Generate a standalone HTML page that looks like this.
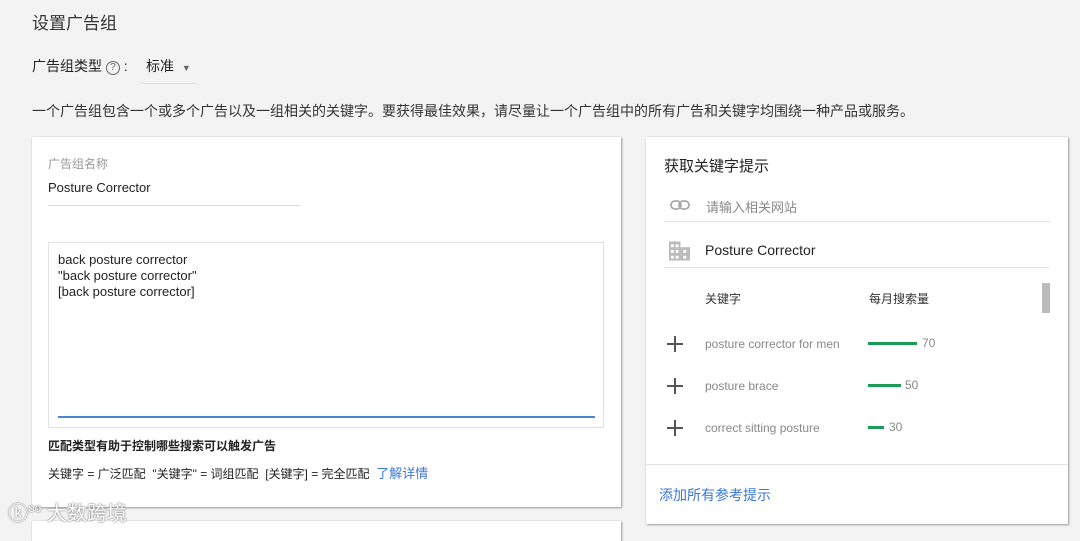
<!DOCTYPE html>
<html><head><meta charset="utf-8"><style>
*{margin:0;padding:0;box-sizing:border-box}
html,body{width:1080px;height:530px}
body{background:#f3f3f3;font-family:"Liberation Sans","Noto Sans CJK SC",sans-serif;color:#222;position:relative;overflow:hidden}
.a{position:absolute;white-space:nowrap}
.card{position:absolute;background:#fff;box-shadow:1px 1px 2px rgba(0,0,0,.35),0 0 1px rgba(0,0,0,.2)}
.plus{position:absolute;width:16px;height:16px}
.plus:before{content:"";position:absolute;left:0;top:7px;width:16px;height:1.5px;background:#555}
.plus:after{content:"";position:absolute;left:7px;top:0;width:1.5px;height:16px;background:#555}
</style></head><body>
<div class="a" style="left:32px;top:9px;font-size:17px;color:#333">设置广告组</div>
<div class="a" style="left:32px;top:56px;font-size:14px;color:#222">广告组类型 <span style="display:inline-block;width:14px;height:14px;border:1px solid #666;border-radius:50%;font-size:10px;text-align:center;line-height:12px;color:#666;vertical-align:1px">?</span> :</div>
<div class="a" style="left:146px;top:56px;font-size:14px">标准 <span style="font-size:9px;color:#666;margin-left:4px">▼</span></div>
<div class="a" style="left:141px;top:83px;width:56px;height:1px;background:#ddd"></div>
<div class="a" style="left:32px;top:101px;font-size:14px;color:#333">一个广告组包含一个或多个广告以及一组相关的关键字。要获得最佳效果，请尽量让一个广告组中的所有广告和关键字均围绕一种产品或服务。</div>

<div class="card" style="left:32px;top:137px;width:589px;height:370px">
<div class="a" style="left:16px;top:18px;font-size:12px;color:#999">广告组名称</div>
<div class="a" style="left:16px;top:43px;font-size:13px;color:#222">Posture Corrector</div>
<div class="a" style="left:16px;top:68px;width:253px;height:1px;background:#ddd"></div>
<div class="a" style="left:16px;top:105px;width:556px;height:186px;border:1px solid #e2e2e2"></div>
<div class="a" style="left:26px;top:115px;font-size:13px;line-height:16px;color:#222">back posture corrector<br>"back posture corrector"<br>[back posture corrector]</div>
<div class="a" style="left:26px;top:279px;width:537px;height:2px;background:#4a86d4"></div>
<div class="a" style="left:16px;top:300px;font-size:12px;font-weight:bold;color:#222">匹配类型有助于控制哪些搜索可以触发广告</div>
<div class="a" style="left:16px;top:326px;font-size:12px;color:#222">关键字 = 广泛匹配 &nbsp;"关键字" = 词组匹配 &nbsp;[关键字] = 完全匹配 &nbsp;<span style="color:#3b78d8;font-size:13px">了解详情</span></div>
</div>
<div class="card" style="left:32px;top:521px;width:589px;height:20px"></div>

<div class="card" style="left:646px;top:137px;width:422px;height:387px">
<div class="a" style="left:18px;top:18px;font-size:15px;color:#222">获取关键字提示</div>
<svg class="a" style="left:24px;top:63px" width="20" height="10" viewBox="0 0 20 10"><rect x="1" y="1" width="10" height="8" rx="4" fill="none" stroke="#aaa" stroke-width="1.8"/><rect x="9" y="1" width="10" height="8" rx="4" fill="none" stroke="#aaa" stroke-width="1.8"/></svg>
<div class="a" style="left:60px;top:60px;font-size:13px;color:#888">请输入相关网站</div>
<div class="a" style="left:18px;top:84px;width:386px;height:1px;background:#e2e2e2"></div>
<svg class="a" style="left:23px;top:104px" width="21" height="20" viewBox="0 0 22 20"><rect x="0" y="0" width="12" height="20" fill="#bbb"/><rect x="12" y="6" width="10" height="14" fill="#bbb"/><g fill="#fff"><rect x="2" y="3" width="3" height="3"/><rect x="7" y="3" width="3" height="3"/><rect x="2" y="9" width="3" height="3"/><rect x="7" y="9" width="3" height="3"/><rect x="2" y="15" width="3" height="3"/><rect x="7" y="15" width="3" height="3"/><rect x="15" y="9" width="3" height="3"/><rect x="15" y="15" width="3" height="3"/></g></svg>
<div class="a" style="left:59px;top:105px;font-size:14px;color:#222">Posture Corrector</div>
<div class="a" style="left:18px;top:130px;width:386px;height:1px;background:#e2e2e2"></div>
<div class="a" style="left:59px;top:153px;font-size:12px;color:#333">关键字</div>
<div class="a" style="left:223px;top:153px;font-size:12px;color:#333">每月搜索量</div>
<div class="a" style="left:396px;top:146px;width:8px;height:30px;background:#bbb"></div>
<div class="plus" style="left:21px;top:199px"></div>
<div class="a" style="left:59px;top:200px;font-size:12px;color:#888">posture corrector for men</div>
<div class="a" style="left:222px;top:205px;width:49px;height:3px;background:#1a9c56"></div>
<div class="a" style="left:276px;top:199px;font-size:12px;color:#888">70</div>
<div class="plus" style="left:21px;top:241px"></div>
<div class="a" style="left:59px;top:242px;font-size:12px;color:#888">posture brace</div>
<div class="a" style="left:222px;top:247px;width:33px;height:3px;background:#1a9c56"></div>
<div class="a" style="left:259px;top:241px;font-size:12px;color:#888">50</div>
<div class="plus" style="left:21px;top:283px"></div>
<div class="a" style="left:59px;top:284px;font-size:12px;color:#888">correct sitting posture</div>
<div class="a" style="left:222px;top:289px;width:16px;height:3px;background:#1a9c56"></div>
<div class="a" style="left:243px;top:283px;font-size:12px;color:#888">30</div>
<div class="a" style="left:0;top:327px;width:422px;height:1px;background:#e2e2e2"></div>
<div class="a" style="left:13px;top:348px;font-size:14px;color:#3b78d8">添加所有参考提示</div>
</div>
<div class="a" style="left:8px;top:497px;font-size:20px;color:#fff;text-shadow:0 0 2px #888,0 0 1px #666">ⓚ<span style="font-size:12px;vertical-align:8px">oo</span> 大数跨境</div>
</body></html>
